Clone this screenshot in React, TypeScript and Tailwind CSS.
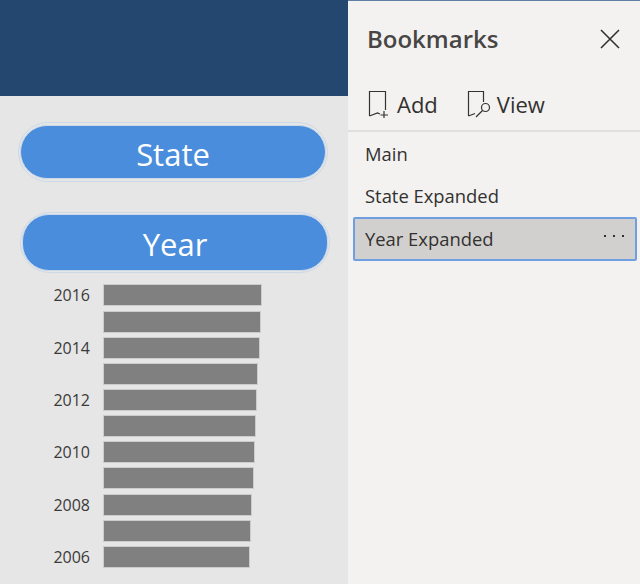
const bars = [
  { year: "2016", width: 159 },
  { year: "", width: 158 },
  { year: "2014", width: 157 },
  { year: "", width: 155 },
  { year: "2012", width: 154 },
  { year: "", width: 153 },
  { year: "2010", width: 152 },
  { year: "", width: 151 },
  { year: "2008", width: 149 },
  { year: "", width: 148 },
  { year: "2006", width: 147 },
];

const bookmarks = ["Main", "State Expanded"];

function PillButton({ label, className }: { label: string; className: string }) {
  return (
    <div className={`w-[310px] rounded-[30px] border border-[#cdd9e6] px-[1px] ${className}`}>
      <div className="flex h-full w-full items-center justify-center rounded-[27px] border border-[#c9d9ea] bg-[#4a8ddc] pt-[4px] text-[31px] leading-none text-white">
        {label}
      </div>
    </div>
  );
}

function AddIcon() {
  return (
    <svg width="21" height="28" viewBox="0 0 21 28" fill="none" stroke="#333" strokeWidth="1.2">
      <path d="M1.5 26V1.5H17.5V20" />
      <path d="M1.5 26L9.5 23L12 24" />
      <path d="M16 21V28M12.5 25H20" />
    </svg>
  );
}

function ViewIcon() {
  return (
    <svg width="24" height="28" viewBox="0 0 24 28" fill="none" stroke="#333" strokeWidth="1.2">
      <path d="M1.5 26V1.5H16.5V12" />
      <path d="M1.5 26L8 23.5" />
      <circle cx="18.5" cy="17.5" r="4" />
      <path d="M15.5 20.5L9 27" />
    </svg>
  );
}

export default function App() {
  return (
    <div className="flex h-[584px] w-[640px] overflow-hidden font-['Open_Sans','Noto_Sans',sans-serif]">
      <div className="flex w-[348px] shrink-0 flex-col bg-[#e6e6e6]">
        <div className="h-[96px] bg-[#24476f]" />
        <PillButton label="State" className="ml-[18px] mt-[26px] h-[60px] py-[2px]" />
        <PillButton label="Year" className="ml-[20px] mt-[30px] h-[61px] py-[1px]" />
        <div className="mt-[11.4px] flex flex-col gap-[4.15px]">
          {bars.map((bar, i) => (
            <div key={i} className="flex h-[22px] items-center">
              <span className="w-[90px] text-right text-[16px] text-[#3b3a39]">{bar.year}</span>
              <div
                className="ml-[13px] h-full border border-[#cccccc] bg-[#808080]"
                style={{ width: bar.width }}
              />
            </div>
          ))}
        </div>
      </div>

      <div className="flex flex-1 flex-col border-t border-[#5f7fa8] bg-[#f3f2f1]">
        <div className="flex items-center justify-between pl-[19px] pr-[19px] pt-[20px]">
          <span className="text-[24px] font-semibold leading-[36px] text-[#484644]">Bookmarks</span>
          <svg width="22" height="22" viewBox="0 0 22 22" stroke="#323130" strokeWidth="1.6">
            <path d="M2 2L20 20M20 2L2 20" />
          </svg>
        </div>
        <div className="mt-[33px] flex h-[42px] items-start border-b-2 border-[#e1dfdd] pl-[20px] text-[#323130]">
          <div className="flex items-center gap-[8px]">
            <AddIcon />
            <span className="text-[22px] leading-[28px]">Add</span>
          </div>
          <div className="ml-[29px] flex items-center gap-[6px]">
            <ViewIcon />
            <span className="text-[22px] leading-[28px]">View</span>
          </div>
        </div>
        <div className="mt-[1px] flex flex-col">
          {bookmarks.map((name) => (
            <div key={name} className="flex h-[42px] items-center pl-[17px] text-[18.4px] text-[#323130]">
              {name}
            </div>
          ))}
          <div className="ml-[5px] mr-[3px] flex h-[44px] items-center justify-between rounded-[2px] border-2 border-[#6f9fe0] bg-[#d2d0ce] pl-[10px] pr-[11px] text-[18.4px] text-[#323130]">
            Year Expanded
            <div className="mb-[6px] flex gap-[7px]">
              <div className="h-[2px] w-[2px] bg-[#323130]" />
              <div className="h-[2px] w-[2px] bg-[#323130]" />
              <div className="h-[2px] w-[2px] bg-[#323130]" />
            </div>
          </div>
        </div>
      </div>
    </div>
  );
}
